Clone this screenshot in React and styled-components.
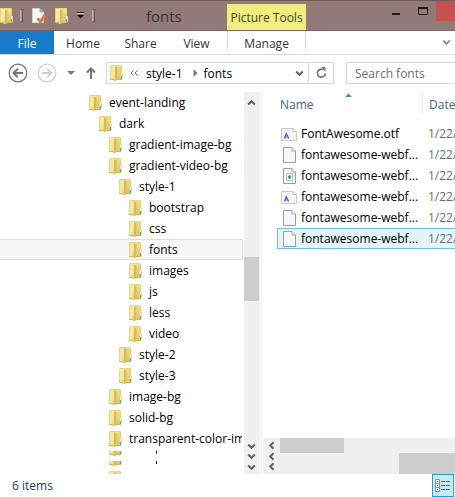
import React from 'react';
import styled, { createGlobalStyle, css } from 'styled-components';

const Global = createGlobalStyle`
  *, *::before, *::after { box-sizing: border-box; }
  body {
    margin: 0;
    background: #fff;
    color: #000;
    font: 12px/19px "Open Sans", "Noto Sans", sans-serif;
    overflow: hidden;
  }
  button, input { font: inherit; color: inherit; }
  button { background: none; border: 0; padding: 0; margin: 0; }
  svg { display: block; flex: none; }
`;

const Window = styled.div`
  display: flex;
  flex-direction: column;
  min-height: 100vh;
`;

const TitleBar = styled.header`
  display: grid;
  grid-template-columns: 227px 79px 1fr;
  height: 31px;
  background: #927a79;
  border-top: 1px solid #74595a;
  border-bottom: 1px solid #7c6263;
`;

const QuickAccess = styled.div`
  display: flex;
  align-items: center;
`;

const QuickButton = styled.button`
  display: flex;
  justify-content: ${(p) => p.$align || 'center'};
  width: ${(p) => p.$width}px;
`;

const Separator = styled.span`
  width: 3px;
  height: 13px;
  background: #a39190;
  border: 1px solid #6c5657;
  border-left-color: #c0b2b2;
`;

const WindowTitle = styled.h1`
  margin: 0 0 0 51px;
  font-size: 15px;
  line-height: 28px;
  font-weight: 400;
  color: #3b3231;
`;

const ToolGroup = styled.div`
  margin-top: 3px;
  padding-top: 4px;
  background: #f0ee80;
  color: #45442e;
  text-align: center;
  white-space: nowrap;
`;

const WindowButtons = styled.div`
  display: flex;
  justify-content: flex-end;
  align-items: flex-start;
  overflow: hidden;
`;

const WindowButton = styled.button`
  display: flex;
  justify-content: center;
  align-items: center;
  width: ${(p) => (p.$close ? 19 : 27)}px;
  height: 20px;
  background: ${(p) => (p.$close ? '#c75050' : 'transparent')};
`;

const Ribbon = styled.nav`
  display: flex;
  height: 24px;
  border-bottom: 1px solid #dadbdc;
  color: #333;
`;

const Tab = styled.button`
  width: ${(p) => p.$width}px;
  line-height: 25px;
  ${(p) => p.$file && css`
    background: #1979ca;
    color: #fff;
  `}
  ${(p) => p.$context && css`
    margin-left: auto;
    border: solid;
    border-width: 0 1px;
    border-image: linear-gradient(#d5d5d5, #d5d5d5 60%, #fff) 1;
  `}
`;

const RibbonToggle = styled.button`
  display: flex;
  align-items: center;
  justify-content: flex-end;
  width: 149px;
  padding-right: 4px;
`;

const Navigation = styled.div`
  display: flex;
  align-items: center;
  height: 36px;
  margin-bottom: 1px;
  padding-left: 8px;
`;

const NavButton = styled.button`
  display: flex;
  justify-content: center;
  width: ${(p) => p.$width}px;
`;

const AddressBar = styled.div`
  display: flex;
  align-items: center;
  flex: 1 0 228px;
  height: 22px;
  border: 1px solid #d9d9d9;
  padding-left: 3px;
`;

const Crumb = styled.button`
  margin: ${(p) => (p.$first ? '0 10px 0 1px' : '0 6px')};
`;

const AddressButton = styled.button`
  display: flex;
  align-items: center;
  justify-content: center;
  width: ${(p) => p.$width}px;
  height: 20px;
  ${(p) => p.$first && 'margin-left: auto;'}
  ${(p) => p.$divided && 'border-left: 1px solid #d9d9d9;'}
`;

const Search = styled.input`
  width: 109px;
  height: 22px;
  margin-left: 12px;
  padding: 0 0 0 8px;
  border: 1px solid #d9d9d9;
  border-right: 0;
  border-radius: 0;
  outline: 0;
  &::placeholder { color: #6d6d6d; opacity: 1; }
`;

const Main = styled.main`
  display: grid;
  grid-template-columns: 243px 17px 1fr;
  flex: 1;
`;

const Tree = styled.ul`
  list-style: none;
  margin: 0;
  padding: 0;
  height: 382px;
  overflow: hidden;
`;

const TreeRow = styled.button`
  display: flex;
  align-items: center;
  gap: 7px;
  width: 100%;
  height: 21px;
  padding-left: ${(p) => 89 + p.$level * 10}px;
  overflow: hidden;
  white-space: nowrap;
  border: 1px solid ${(p) => (p.$selected ? '#dedede' : 'transparent')};
  border-left: 0;
  background: ${(p) => (p.$selected ? '#f7f7f7' : 'transparent')};
`;

const Sliver = styled.li`
  display: flex;
  align-items: center;
  gap: 34px;
  height: 10px;
  padding: 0 0 2px 109px;
`;

const VerticalTrack = styled.div`
  display: flex;
  flex-direction: column;
  align-items: flex-start;
  margin-left: 1px;
  background: #f0f0f0;
`;

const ScrollButton = styled.button`
  display: flex;
  align-items: center;
  justify-content: center;
  width: ${(p) => p.$width || 15}px;
  height: ${(p) => p.$height}px;
`;

const VerticalThumb = styled.div`
  width: 15px;
  height: 44px;
  margin: 145px auto auto 0;
  background: #cdcdcd;
`;

const FilePane = styled.section`
  display: flex;
  flex-direction: column;
  min-width: 0;
  margin-left: 1px;
  padding-left: 1px;
  border-left: 1px solid #f0f0f0;
  overflow: hidden;
`;

const FileTable = styled.table`
  width: calc(100% - 14px);
  margin-left: 14px;
  table-layout: fixed;
  border-collapse: separate;
  border-spacing: 0;
`;

const NameHead = styled.th`
  width: 146px;
  height: 22px;
  padding: 3px 0 0 3px;
  font-weight: 400;
  text-align: left;
  vertical-align: top;
  color: #4c607a;
  border-right: 1px solid #e2ecf5;
`;

const DateHead = styled(NameHead)`
  width: auto;
  padding-left: 6px;
  border-right: 0;
`;

const HeadLabel = styled.div`
  display: flex;
  align-items: flex-start;
  gap: 31px;
  height: 19px;
  svg { margin-top: -2px; }
`;

const BodyGap = styled.tr`
  height: 9px;
`;

const Cell = styled.td`
  height: 21px;
  padding: 0 0 0 ${(p) => (p.$date ? 5 : 3)}px;
  white-space: nowrap;
  overflow: hidden;
  color: ${(p) => (p.$date ? '#6d6d6d' : '#000')};
  border: solid ${(p) => (p.$selected ? '#70c0e7' : 'transparent')};
  border-width: ${(p) => (p.$date ? '1px 0' : '1px 0 1px 1px')};
  background: ${(p) => (p.$selected ? '#e5f3fb' : 'transparent')};
`;

const FileName = styled.div`
  display: flex;
  align-items: center;
  gap: 4px;
  height: 19px;
`;

const HorizontalScroll = styled.div`
  margin-top: auto;
  background: #f0f0f0;
`;

const HorizontalTrack = styled.div`
  display: flex;
  height: ${(p) => p.$height}px;
`;

const HorizontalThumb = styled.div`
  width: ${(p) => p.$width}px;
  margin-left: ${(p) => (p.$end ? 'auto' : 0)};
  background: #cdcdcd;
`;

const ArrowStack = styled.div`
  display: flex;
  flex-direction: column;
`;

const StatusBar = styled.footer`
  display: flex;
  justify-content: space-between;
  align-items: center;
  height: 23px;
  padding: 0 1px 0 12px;
  color: #1f3a5f;
`;

const ViewButton = styled.button`
  display: flex;
  align-items: center;
  justify-content: center;
  width: 22px;
  height: 23px;
  border: 1px solid #26a0da;
  background: #cbe8f6;
`;

const FolderIcon = ({ view = '0 0 13 16', height = 16 }) => (
  <svg width="13" height={height} viewBox={view} aria-hidden="true">
    <defs>
      <linearGradient id="folderFront" x1="0" y1="0" x2="1" y2="1">
        <stop offset="0" stopColor="#f3e79c" />
        <stop offset="0.5" stopColor="#f6eaa0" />
        <stop offset="1" stopColor="#dfc360" />
      </linearGradient>
      <linearGradient id="folderBack" x1="0" y1="0" x2="0" y2="1">
        <stop offset="0" stopColor="#f2e28c" />
        <stop offset="1" stopColor="#e0c45c" />
      </linearGradient>
    </defs>
    <path d="M5 0H11Q12 0 12 1V15H5Z" fill="url(#folderBack)" />
    <path d="M11.5 1V8" stroke="#e3cf7c" />
    <path d="M12 8h1v6h-1z" fill="#d5dbd3" />
    <path d="M11 8h1v3h-1z" fill="#f0f4f2" />
    <path d="M11 11h1v3h-1z" fill="#42a6e8" />
    <path d="M0 1Q0 0 1 0H5L7 1V15L6 16H4L3 15H0Z" fill="url(#folderFront)" />
    <path d="M.5 1V15M1 .5H11" stroke="#e8d584" />
    <path d="M5 1L7 2V15L5 16Z" fill="#d6bb5a" />
    <path d="M7 2H8V15H7Z" fill="#e2cb6e" />
    <path d="M0 14.5H4M7 14.5H12" stroke="#d6b957" fill="none" />
  </svg>
);

const CheckPageIcon = () => (
  <svg width="15" height="16" viewBox="0 0 15 16" aria-hidden="true">
    <path d="M.5.5H8L11.5 4V14.5H.5Z" fill="#f7f8f8" stroke="#d0d1d1" />
    <path d="M8 .5V4H11.5Z" fill="#b9bcbe" stroke="#85898b" strokeWidth=".7" />
    <path d="M5.5 10.5L8.5 13.5L13.5 6.5" fill="none" stroke="#e8743b" strokeWidth="3" />
  </svg>
);

const PageIcon = ({ kind }) => (
  <svg width="16" height="16" viewBox="0 0 16 16" aria-hidden="true">
    {kind === 'font' ? (
      <>
        <path d="M.5 2.5H12L15.5 5.5V14.5H.5Z" fill="#f3f3f3" stroke="#c9c9c9" />
        <path d="M12 2.5V5.5H15.5" fill="#fff" stroke="#bdbdbd" />
        <path d="M3.5 12.5L5.3 8L7.6 12.5" fill="none" stroke="#4263b8" strokeWidth="1.5" />
        <path d="M4.3 10.8H7" stroke="#6d8bd0" />
      </>
    ) : (
      <>
        <path d="M2.5.5H11L14.5 4V15.5H2.5Z" fill="#f8f8f8" stroke="#9c9c9c" />
        <path d="M11 .5V4H14.5" fill="#fff" stroke="#a5a5a5" />
        {kind === 'image' && (
          <>
            <path d="M5.5 5.5H11.5V12.5H5.5Z" fill="#fff" stroke="#bababa" />
            <path d="M8.5 7V11M7 9H10" stroke="#2d9b34" strokeWidth="1.4" />
          </>
        )}
      </>
    )}
  </svg>
);

const turns = { down: 0, left: 90, up: 180 };
const Chevron = ({ direction = 'down', color = '#606060' }) => (
  <svg width="9" height="9" viewBox="0 0 9 9" aria-hidden="true">
    <path
      d="M1.2 2.5L4.5 5.8L7.8 2.5"
      transform={`rotate(${turns[direction]} 4.5 4.5)`}
      fill="none"
      stroke={color}
      strokeWidth="2"
    />
  </svg>
);

const CircleArrow = ({ color, forward }) => (
  <svg width="20" height="20" viewBox="0 0 20 20" aria-hidden="true">
    <circle cx="10" cy="10" r="8.8" fill="none" stroke={color} strokeWidth="1.3" />
    <path
      d="M15 10H6M9.8 5.8L5.6 10L9.8 14.2"
      transform={forward ? 'rotate(180 10 10)' : undefined}
      fill="none"
      stroke={color}
      strokeWidth="2"
    />
  </svg>
);

const folders = [
  ['event-landing', 0],
  ['dark', 1],
  ['gradient-image-bg', 2],
  ['gradient-video-bg', 2],
  ['style-1', 3],
  ['bootstrap', 4],
  ['css', 4],
  ['fonts', 4],
  ['images', 4],
  ['js', 4],
  ['less', 4],
  ['video', 4],
  ['style-2', 3],
  ['style-3', 3],
  ['image-bg', 2],
  ['solid-bg', 2],
  ['transparent-color-ima', 2],
];

const files = [
  ['FontAwesome.otf', 'font'],
  ['fontawesome-webf...', 'page'],
  ['fontawesome-webf...', 'image'],
  ['fontawesome-webf...', 'font'],
  ['fontawesome-webf...', 'page'],
  ['fontawesome-webf...', 'page'],
];

const FolderSliver = () => (
  <Sliver aria-hidden="true">
    <FolderIcon view="0 11 13 5" height={5} />
    <svg width="2" height="4" viewBox="0 0 2 4">
      <path d="M.5 0V3" stroke="#43203f" />
    </svg>
  </Sliver>
);

export default function App() {
  return (
    <>
      <Global />
      <Window>
        <TitleBar>
          <QuickAccess>
            <QuickButton $width={20} $align="flex-start" aria-label="Explorer"><FolderIcon /></QuickButton>
            <Separator />
            <QuickButton $width={32} aria-label="Properties"><CheckPageIcon /></QuickButton>
            <QuickButton $width={13} aria-label="New folder"><FolderIcon /></QuickButton>
            <QuickButton $width={24} aria-label="Customize toolbar">
              <svg width="7" height="7" viewBox="0 0 7 7">
                <path d="M0 .5H7" stroke="#111" />
                <path d="M0 1.5H7" stroke="#d8cfcf" />
                <path d="M0 3H7L3.5 6.5Z" fill="#111" />
              </svg>
            </QuickButton>
            <Separator />
            <WindowTitle>fonts</WindowTitle>
          </QuickAccess>
          <ToolGroup>Picture Tools</ToolGroup>
          <WindowButtons>
            <WindowButton aria-label="Minimize">
              <svg width="8" height="8" viewBox="0 0 8 8"><path d="M0 7H8" stroke="#1e1a1a" strokeWidth="2" /></svg>
            </WindowButton>
            <WindowButton aria-label="Maximize">
              <svg width="10" height="8" viewBox="0 0 10 8">
                <path d="M.5 1H9.5V7.5H.5Z" fill="none" stroke="#1e1a1a" />
                <path d="M0 1H10" stroke="#1e1a1a" strokeWidth="2" />
              </svg>
            </WindowButton>
            <WindowButton $close aria-label="Close" />
          </WindowButtons>
        </TitleBar>

        <Ribbon>
          <Tab $width={54} $file>File</Tab>
          <Tab $width={58}>Home</Tab>
          <Tab $width={57}>Share</Tab>
          <Tab $width={55}>View</Tab>
          <Tab $width={79} $context>Manage</Tab>
          <RibbonToggle aria-label="Expand the ribbon"><Chevron color="#999" /></RibbonToggle>
        </Ribbon>

        <Navigation>
          <NavButton $width={20} aria-label="Back"><CircleArrow color="#747474" /></NavButton>
          <NavButton $width={38} aria-label="Forward"><CircleArrow color="#cfcfcf" forward /></NavButton>
          <NavButton $width={10} aria-label="Recent locations">
            <svg width="8" height="4" viewBox="0 0 8 4"><path d="M0 0H8L4 4Z" fill="#777" /></svg>
          </NavButton>
          <NavButton $width={30} aria-label="Up">
            <svg width="10" height="12" viewBox="0 0 10 12">
              <path d="M5 12V2M1 5.5L5 1.5L9 5.5" fill="none" stroke="#777" strokeWidth="2" />
            </svg>
          </NavButton>
          <AddressBar>
            <FolderIcon />
            <NavButton $width={22} aria-label="Parent folders">
              <svg width="8" height="6" viewBox="0 0 8 6">
                <path d="M3.5 .4L1 3L3.5 5.6M7.5 .4L5 3L7.5 5.6" fill="none" stroke="#666" />
              </svg>
            </NavButton>
            <Crumb $first>style-1</Crumb>
            <svg width="5" height="8" viewBox="0 0 5 8" aria-hidden="true"><path d="M.5 0L4.5 4L.5 8Z" fill="#777" /></svg>
            <Crumb>fonts</Crumb>
            <AddressButton $width={18} $first aria-label="Previous locations"><Chevron /></AddressButton>
            <AddressButton $width={25} $divided aria-label="Refresh">
              <svg width="11" height="12" viewBox="0 0 11 12">
                <path d="M7.5 2.8A4 4 0 1 0 9.4 6.5" fill="none" stroke="#777" strokeWidth="1.7" />
                <path d="M5.5 0H9.5V5Z" fill="#777" />
              </svg>
            </AddressButton>
          </AddressBar>
          <Search type="search" placeholder="Search fonts" aria-label="Search fonts" />
        </Navigation>

        <Main>
          <Tree aria-label="Folders">
            {folders.map(([name, level]) => (
              <li key={name}>
                <TreeRow $level={level} $selected={name === 'fonts'}>
                  <FolderIcon />
                  {name}
                </TreeRow>
              </li>
            ))}
            <FolderSliver />
            <FolderSliver />
            <Sliver aria-hidden="true"><FolderIcon view="0 0 13 5" height={5} /></Sliver>
          </Tree>
          <VerticalTrack>
            <ScrollButton $height={20} aria-label="Scroll up"><Chevron direction="up" /></ScrollButton>
            <VerticalThumb />
            <ScrollButton $height={10} aria-label="Scroll down"><Chevron /></ScrollButton>
            <ScrollButton $height={10} aria-label="Scroll down"><Chevron /></ScrollButton>
            <ScrollButton $height={13} aria-label="Scroll down"><Chevron /></ScrollButton>
          </VerticalTrack>
          <FilePane>
            <FileTable>
              <thead>
                <tr>
                  <NameHead>
                    <HeadLabel>
                      Name
                      <svg width="7" height="4" viewBox="0 0 7 4" aria-hidden="true"><path d="M0 4L3.5 .5L7 4Z" fill="#4c8fae" /></svg>
                    </HeadLabel>
                  </NameHead>
                  <DateHead><HeadLabel>Date</HeadLabel></DateHead>
                </tr>
              </thead>
              <tbody>
                <BodyGap aria-hidden="true"><td colSpan="2" /></BodyGap>
                {files.map(([name, kind], index) => (
                  <tr key={index}>
                    <Cell $selected={index === 5}><FileName><PageIcon kind={kind} />{name}</FileName></Cell>
                    <Cell $date $selected={index === 5}>1/22/</Cell>
                  </tr>
                ))}
              </tbody>
            </FileTable>
            <HorizontalScroll>
              <HorizontalTrack $height={15}>
                <ScrollButton $width={17} $height={15} aria-label="Scroll left"><Chevron direction="left" /></ScrollButton>
                <HorizontalThumb $width={64} />
              </HorizontalTrack>
              <HorizontalTrack $height={21}>
                <ArrowStack>
                  <ScrollButton $width={17} $height={6} aria-label="Scroll left"><Chevron direction="left" /></ScrollButton>
                  <ScrollButton $width={17} $height={14} aria-label="Scroll left"><Chevron direction="left" /></ScrollButton>
                </ArrowStack>
                <HorizontalThumb $width={56} $end />
              </HorizontalTrack>
            </HorizontalScroll>
          </FilePane>
        </Main>

        <StatusBar>
          6 items
          <ViewButton aria-label="Details view">
            <svg width="16" height="13" viewBox="0 0 16 13">
              <path d="M.5 .5H4.5V12.5H.5ZM.5 4.5H4.5M.5 8.5H4.5" fill="#fff" stroke="#8795a8" />
              <path d="M2 2H3V3H2Z" fill="#278a32" />
              <path d="M2 6H3V7H2Z" fill="#d21f1f" />
              <path d="M2 10H3V11H2Z" fill="#1c56c0" />
              <path d="M6 2.5H10M11 2.5H15M6 6.5H10M11 6.5H15M6 10.5H10M11 10.5H15" stroke="#51617c" />
            </svg>
          </ViewButton>
        </StatusBar>
      </Window>
    </>
  );
}
